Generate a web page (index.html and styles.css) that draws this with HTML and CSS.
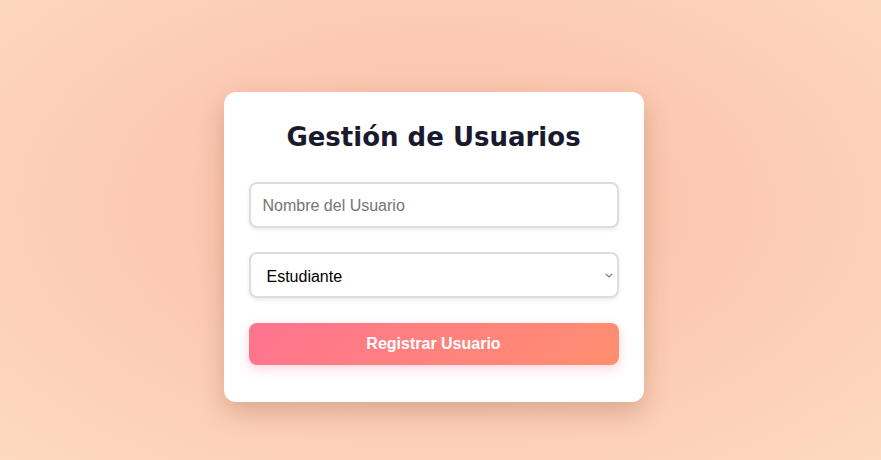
FILE: index.html
```html
<!DOCTYPE html>
<html lang="es">
<head>
<meta charset="UTF-8">
<title>Gestión de Usuarios</title>
<link rel="stylesheet" href="styles.css">
</head>
<body>
<main class="page">
  <div class="card">
    <h2 class="title">Gestión de Usuarios</h2>
    <input class="field" type="text" placeholder="Nombre del Usuario">
    <div class="select-wrap">
      <select class="field select">
        <option>Estudiante</option>
        <option>Profesor</option>
      </select>
      <svg class="chev" width="8" height="5" viewBox="0 0 8 5" aria-hidden="true">
        <path d="M0.8 0.8 L4 4 L7.2 0.8" fill="none" stroke="#777" stroke-width="1.1"/>
      </svg>
    </div>
    <button class="btn" type="button">Registrar Usuario</button>
  </div>
</main>
</body>
</html>
```
FILE: styles.css
```css
html, body {
  margin: 0;
  height: 100%;
}
body {
  font-family: "Liberation Sans", Arial, sans-serif;
  background: radial-gradient(ellipse at 50% 45%, #fbbea5 0%, #fcc6af 35%, #fdd9c0 100%);
}
.page {
  box-sizing: border-box;
  min-height: 100vh;
  display: flex;
  align-items: center;
  justify-content: center;
  padding: 34px 14px 0 0;
}
.card {
  box-sizing: border-box;
  width: 420px;
  background: #fff;
  border-radius: 12px;
  padding: 30px 25px 37px;
  display: flex;
  flex-direction: column;
  box-shadow: 0 10px 25px rgba(120, 60, 30, 0.25);
}
.title {
  margin: 0 0 30px;
  text-align: center;
  font-family: "DejaVu Sans", Verdana, sans-serif;
  font-size: 26px;
  font-weight: bold;
  color: #1a1a2e;
}
.field {
  box-sizing: border-box;
  width: 100%;
  height: 46px;
  padding: 13px 12px 11px;
  font-family: "Liberation Sans", Arial, sans-serif;
  font-size: 16px;
  color: #000;
  border: 2px solid #ddd;
  border-radius: 8px;
  background: #fff;
  box-shadow: 0 2px 4px rgba(0, 0, 0, 0.08);
  outline: none;
  margin-bottom: 24px;
}
.field::placeholder {
  color: #757575;
}
.select-wrap {
  position: relative;
  margin-bottom: 25px;
}
.select {
  -webkit-appearance: none;
  appearance: none;
  padding-left: 16px;
  margin: 0;
  display: block;
}
.chev {
  position: absolute;
  right: 6px;
  top: 21px;
  pointer-events: none;
}
.btn {
  height: 42px;
  width: 100%;
  border: none;
  border-radius: 8px;
  background: linear-gradient(135deg, #ff738f 0%, #ff8f6f 100%);
  color: #fff;
  font-family: "Liberation Sans", Arial, sans-serif;
  font-size: 16px;
  font-weight: bold;
  box-shadow: 0 4px 12px rgba(255, 117, 140, 0.3);
  cursor: pointer;
}
```
